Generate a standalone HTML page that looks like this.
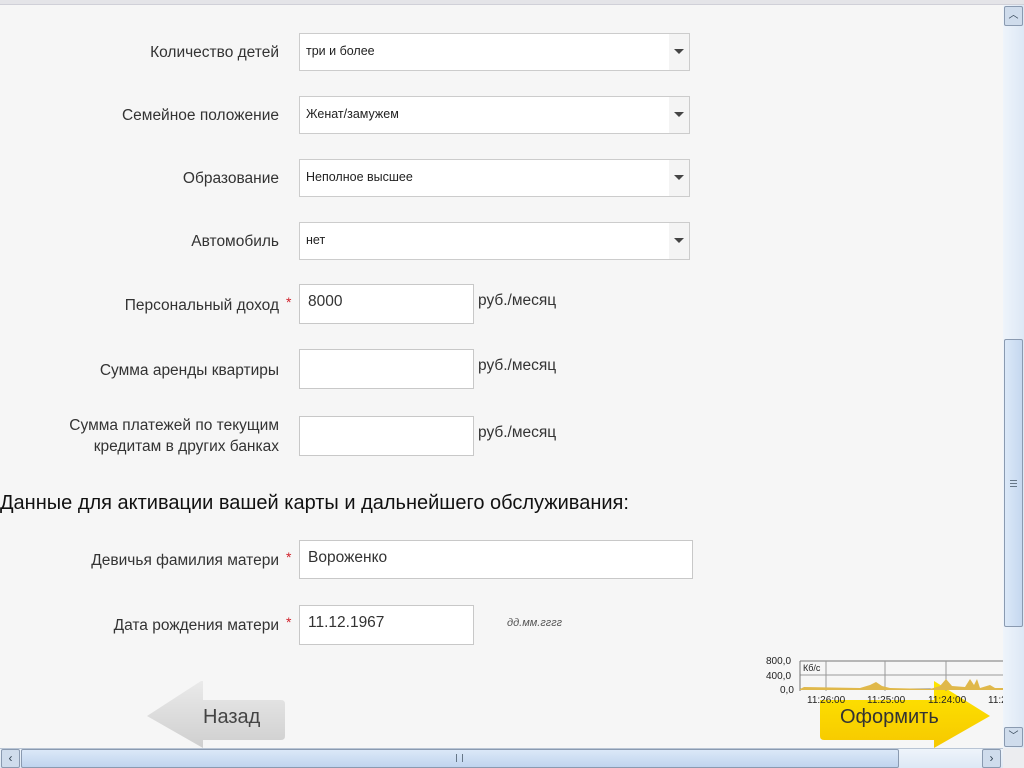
<!DOCTYPE html>
<html><head><meta charset="utf-8"><style>
*{margin:0;padding:0;box-sizing:border-box}
body{width:1024px;height:768px;overflow:hidden;background:#f6f6f6;font-family:"Liberation Sans",Arial,sans-serif;color:#333;position:relative}
.a{position:absolute}
.lbl{position:absolute;right:745px;font-size:15.5px;color:#333;text-align:right;line-height:21px;white-space:nowrap}
.sel{position:absolute;left:299px;width:391px;height:38px;background:#fff;border:1px solid #ccc;font-size:12.5px;color:#222;padding:10px 0 0 6px}
.sel:after{content:"";position:absolute;right:0;top:0;width:20px;height:36px;background:#f4f4f4}
.sel i{position:absolute;right:5px;top:15px;width:0;height:0;border-left:5px solid transparent;border-right:5px solid transparent;border-top:5px solid #444;z-index:2}
.inp{position:absolute;left:299px;width:175px;height:40px;background:#fff;border:1px solid #c8c8c8;font-size:15.5px;color:#333;padding:8px 0 0 8px}
.rub{position:absolute;left:478px;font-size:15.5px;color:#333}
.st{position:absolute;left:286px;color:#d0202a;font-size:14px}
</style></head><body>
<div class="a" style="left:0;top:0;width:1024px;height:5px;background:#e4e4e8;border-bottom:1px solid #d0d0d8"></div>

<div class="lbl" style="top:42px">Количество детей</div>
<div class="sel" style="top:33px">три и более<i></i></div>
<div class="lbl" style="top:105px">Семейное положение</div>
<div class="sel" style="top:96px">Женат/замужем<i></i></div>
<div class="lbl" style="top:168px">Образование</div>
<div class="sel" style="top:159px">Неполное высшее<i></i></div>
<div class="lbl" style="top:231px">Автомобиль</div>
<div class="sel" style="top:222px">нет<i></i></div>

<div class="lbl" style="top:295px">Персональный доход</div><div class="st" style="top:294px">*</div>
<div class="inp" style="top:284px">8000</div><div class="rub" style="top:292px">руб./месяц</div>
<div class="lbl" style="top:360px">Сумма аренды квартиры</div>
<div class="inp" style="top:349px"></div><div class="rub" style="top:357px">руб./месяц</div>
<div class="lbl" style="top:415px">Сумма платежей по текущим<br>кредитам в других банках</div>
<div class="inp" style="top:416px"></div><div class="rub" style="top:424px">руб./месяц</div>

<div class="a" style="left:0;top:492px;font-size:20px;color:#111">Данные для активации вашей карты и дальнейшего обслуживания:</div>

<div class="lbl" style="top:550px">Девичья фамилия матери</div><div class="st" style="top:549px">*</div>
<div class="inp" style="top:540px;width:394px;height:39px">Вороженко</div>
<div class="lbl" style="top:615px">Дата рождения матери</div><div class="st" style="top:614px">*</div>
<div class="inp" style="top:605px">11.12.1967</div>
<div class="a" style="left:507px;top:617px;font-size:11px;font-style:italic;color:#555">дд.мм.гггг</div>

<svg class="a" style="left:145px;top:678px" width="142" height="70"><defs><linearGradient id="g" x1="0" y1="0" x2="0" y2="1"><stop offset="0" stop-color="#eaeaea"/><stop offset="1" stop-color="#cfcfcf"/></linearGradient></defs><path d="M2 38 L56 3 L58 3 L58 22 L136 22 Q140 22 140 26 L140 58 Q140 62 136 62 L58 62 L58 70 L2 38Z" fill="url(#g)"/><text x="58" y="45" font-family="Liberation Sans" font-size="20" fill="#444">Назад</text></svg>

<svg class="a" style="left:818px;top:678px" width="175" height="70"><defs><linearGradient id="y" x1="0" y1="0" x2="0" y2="1"><stop offset="0" stop-color="#ffe600"/><stop offset="1" stop-color="#f6c800"/></linearGradient></defs><path d="M2 22 L116 22 L116 3 L172 38 L116 70 L116 62 L6 62 Q2 62 2 58Z" fill="url(#y)"/><text x="22" y="45" font-family="Liberation Sans" font-size="20" fill="#333">Оформить</text></svg>

<svg class="a" style="left:740px;top:655px" width="263" height="52" font-family="Liberation Sans" font-size="10" fill="#222">
<text x="26" y="9">800,0</text><text x="26" y="24">400,0</text><text x="40" y="38">0,0</text>
<line x1="60" y1="6" x2="263" y2="6" stroke="#777"/><line x1="60" y1="20" x2="263" y2="20" stroke="#999"/><line x1="60" y1="34" x2="263" y2="34" stroke="#777"/>
<line x1="60" y1="6" x2="60" y2="36" stroke="#777"/>
<line x1="86" y1="6" x2="86" y2="36" stroke="#999"/><line x1="145" y1="6" x2="145" y2="36" stroke="#999"/><line x1="206" y1="6" x2="206" y2="36" stroke="#999"/><line x1="266" y1="6" x2="266" y2="36" stroke="#999"/>
<path d="M60 34 L64 32 L120 33 L130 30 L136 27 L142 31 L150 33 L190 34 L200 31 L206 24 L212 31 L225 32 L230 24 L234 30 L237 24 L240 33 L250 30 L255 33 L263 33 L263 35 L60 35Z" fill="#e0b84a"/>
<text x="63" y="16" font-size="9">Кб/с</text>
<text x="67" y="48">11:26:00</text><text x="127" y="48">11:25:00</text><text x="188" y="48">11:24:00</text><text x="248" y="48">11:23:00</text>
</svg>

<div class="a" style="left:1003px;top:5px;width:21px;height:743px;background:linear-gradient(90deg,#eef4fb,#dde8f5)"></div>
<div class="a" style="left:1004px;top:6px;width:19px;height:20px;border:1px solid #8a9ab0;border-radius:2px;background:#cfdcec;font-size:10px;text-align:center;color:#345;line-height:18px">︿</div>
<div class="a" style="left:1004px;top:339px;width:19px;height:288px;border:1px solid #8a9ab0;border-radius:2px;background:linear-gradient(90deg,#dbe8f8,#c5d8ef)"></div>
<div class="a" style="left:1010px;top:480px;width:7px;height:7px;border-top:1px solid #678;border-bottom:1px solid #678"><div style="margin-top:2px;border-top:1px solid #678"></div></div>
<div class="a" style="left:1004px;top:727px;width:19px;height:20px;border:1px solid #8a9ab0;border-radius:2px;background:#cfdcec;font-size:10px;text-align:center;color:#345;line-height:18px">﹀</div>

<div class="a" style="left:0;top:748px;width:1003px;height:20px;background:linear-gradient(#eef4fb,#dde8f5);border-top:1px solid #b8c4d4"></div>
<div class="a" style="left:1px;top:749px;width:19px;height:19px;border:1px solid #8a9ab0;border-radius:2px;background:#cfdcec;font-size:12px;text-align:center;color:#345;line-height:17px">‹</div>
<div class="a" style="left:21px;top:749px;width:878px;height:19px;border:1px solid #8a9ab0;border-radius:2px;background:linear-gradient(#dbe8f8,#c0d4ee)"></div>
<div class="a" style="left:456px;top:754px;width:7px;height:8px;border-left:1px solid #678;border-right:1px solid #678"></div>
<div class="a" style="left:982px;top:749px;width:19px;height:19px;border:1px solid #8a9ab0;border-radius:2px;background:#cfdcec;font-size:12px;text-align:center;color:#345;line-height:17px">›</div>
<div class="a" style="left:1003px;top:748px;width:21px;height:20px;background:#ecedf0"></div>
</body></html>
